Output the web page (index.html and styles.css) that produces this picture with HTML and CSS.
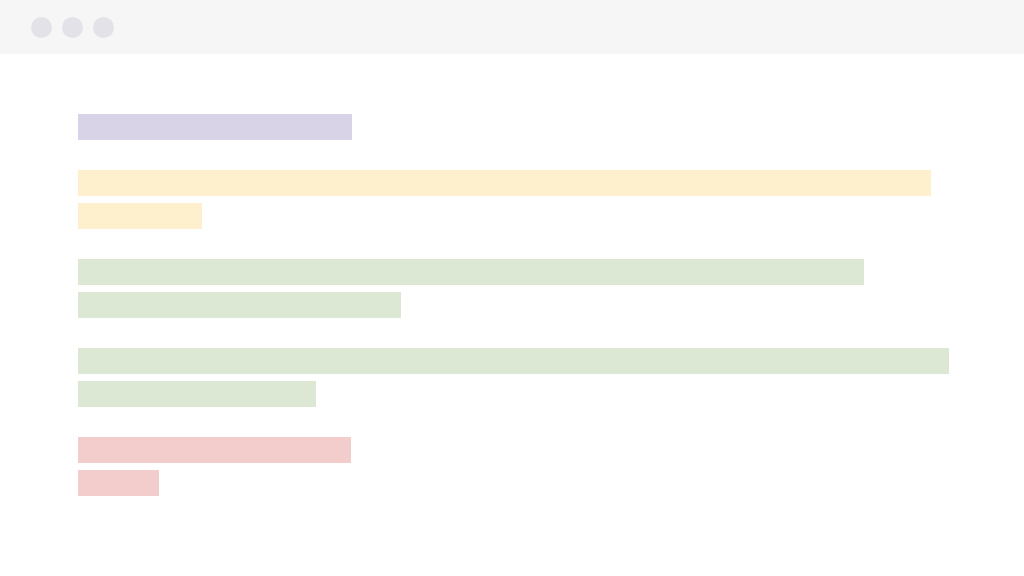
FILE: index.html
```html
<!DOCTYPE html>
<html lang="en">
<head>
  <meta charset="UTF-8">
  <title>Wireframe</title>
  <link rel="stylesheet" href="styles.css">
</head>
<body>
  <div class="window">
    <div class="titlebar">
      <span class="dot"></span>
      <span class="dot"></span>
      <span class="dot"></span>
    </div>

    <div class="content">
      <!-- Título -->
      <div class="group">
        <div class="bar purple" style="width: 274px"></div>
      </div>

      <div class="group">
        <div class="bar yellow" style="width: 853px"></div>
        <div class="bar yellow" style="width: 124px"></div>
      </div>

      <div class="group">
        <div class="bar green" style="width: 786px"></div>
        <div class="bar green" style="width: 323px"></div>
      </div>

      <div class="group">
        <div class="bar green" style="width: 871px"></div>
        <div class="bar green" style="width: 238px"></div>
      </div>

      <div class="group">
        <div class="bar red" style="width: 273px"></div>
        <div class="bar red" style="width: 81px"></div>
      </div>
    </div>
  </div>
</body>
</html>
```

FILE: styles.css
```css
body {
  margin: 0;
  background-color: #ffffff;
  font-family: "Liberation Sans", Arial, sans-serif;
}

.window {
  width: 1024px;
  height: 576px;
  overflow: hidden;
}

.titlebar {
  height: 54px;
  background-color: #f6f6f6;
  display: flex;
  align-items: center;
  gap: 10px;
  padding-left: 31px;
}

.dot {
  width: 21px;
  height: 21px;
  border-radius: 50%;
  background-color: #e3e2e9;
}

.content {
  display: flex;
  flex-direction: column;
  gap: 30px;
  padding: 60px 0 0 78px;
}

.group {
  display: flex;
  flex-direction: column;
  gap: 7px;
}

.bar {
  height: 26px;
}

.purple {
  background-color: #d9d3e8;
}

.yellow {
  background-color: #fef0cd;
}

.green {
  background-color: #dce8d4;
}

.red {
  background-color: #f3cdcb;
}
```
